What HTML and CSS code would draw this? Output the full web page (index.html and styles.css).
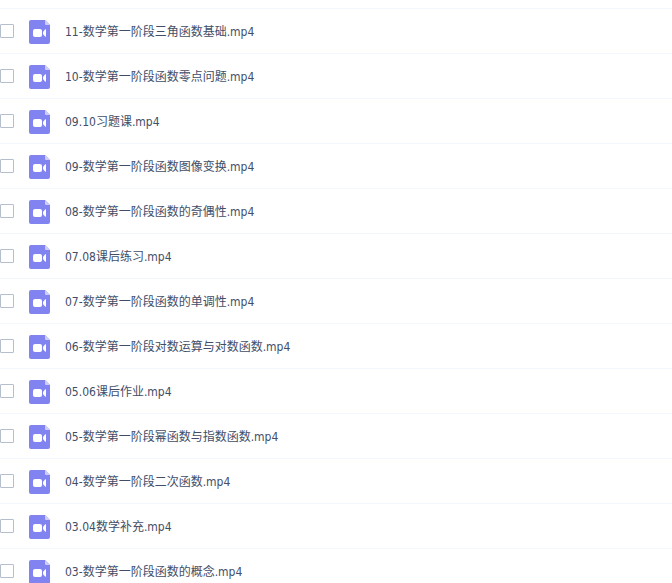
FILE: index.html
```
<!DOCTYPE html>
<html lang="zh-CN">
<head>
    <meta charset="UTF-8">
    <meta name="viewport" content="width=device-width, initial-scale=1.0">
    <title>文件列表</title>
    <link rel="stylesheet" href="styles.css">
</head>
<body>
    <svg class="sprite" aria-hidden="true">
        <symbol id="video" viewBox="0 0 21 24">
            <path fill="#8183f1" d="M2 0h14l5 5v17a2 2 0 0 1-2 2H2a2 2 0 0 1-2-2V2a2 2 0 0 1 2-2z"/>
            <path fill="#cdcdfa" d="M16 0l5 5h-4a1 1 0 0 1-1-1z"/>
            <rect fill="#fff" x="4" y="9" width="9" height="8" rx="2"/>
            <path fill="#fff" d="M17 9v8q-1 0-3-3v-2q2-3 3-3z"/>
        </symbol>
    </svg>

    <ul class="file-list">
        <li class="file-item">
            <input type="checkbox" id="f1">
            <svg class="file-icon"><use href="#video"/></svg>
            <label for="f1">11-数学第一阶段三角函数基础.mp4</label>
        </li>
        <li class="file-item">
            <input type="checkbox" id="f2">
            <svg class="file-icon"><use href="#video"/></svg>
            <label for="f2">10-数学第一阶段函数零点问题.mp4</label>
        </li>
        <li class="file-item">
            <input type="checkbox" id="f3">
            <svg class="file-icon"><use href="#video"/></svg>
            <label for="f3">09.10习题课.mp4</label>
        </li>
        <li class="file-item">
            <input type="checkbox" id="f4">
            <svg class="file-icon"><use href="#video"/></svg>
            <label for="f4">09-数学第一阶段函数图像变换.mp4</label>
        </li>
        <li class="file-item">
            <input type="checkbox" id="f5">
            <svg class="file-icon"><use href="#video"/></svg>
            <label for="f5">08-数学第一阶段函数的奇偶性.mp4</label>
        </li>
        <li class="file-item">
            <input type="checkbox" id="f6">
            <svg class="file-icon"><use href="#video"/></svg>
            <label for="f6">07.08课后练习.mp4</label>
        </li>
        <li class="file-item">
            <input type="checkbox" id="f7">
            <svg class="file-icon"><use href="#video"/></svg>
            <label for="f7">07-数学第一阶段函数的单调性.mp4</label>
        </li>
        <li class="file-item">
            <input type="checkbox" id="f8">
            <svg class="file-icon"><use href="#video"/></svg>
            <label for="f8">06-数学第一阶段对数运算与对数函数.mp4</label>
        </li>
        <li class="file-item">
            <input type="checkbox" id="f9">
            <svg class="file-icon"><use href="#video"/></svg>
            <label for="f9">05.06课后作业.mp4</label>
        </li>
        <li class="file-item">
            <input type="checkbox" id="f10">
            <svg class="file-icon"><use href="#video"/></svg>
            <label for="f10">05-数学第一阶段幂函数与指数函数.mp4</label>
        </li>
        <li class="file-item">
            <input type="checkbox" id="f11">
            <svg class="file-icon"><use href="#video"/></svg>
            <label for="f11">04-数学第一阶段二次函数.mp4</label>
        </li>
        <li class="file-item">
            <input type="checkbox" id="f12">
            <svg class="file-icon"><use href="#video"/></svg>
            <label for="f12">03.04数学补充.mp4</label>
        </li>
        <li class="file-item">
            <input type="checkbox" id="f13">
            <svg class="file-icon"><use href="#video"/></svg>
            <label for="f13">03-数学第一阶段函数的概念.mp4</label>
        </li>
    </ul>
</body>
</html>
```
FILE: styles.css
```
body {
    margin: 0;
    padding-top: 8px;
    height: 100vh;
    box-sizing: border-box;
    overflow: hidden;
    background-color: #fff;
    color: #424e67;
    font-family: "DejaVu Sans Condensed", "Noto Sans CJK SC", sans-serif;
    font-size: 12px;
    line-height: 16px;
}
.sprite {
    display: none;
}
.file-list {
    list-style: none;
    margin: 0;
    padding: 0;
}
.file-item {
    display: flex;
    align-items: center;
    height: 45px;
    box-sizing: border-box;
    border-top: 1px solid #f2f6fd;
}
.file-item input {
    appearance: none;
    box-sizing: border-box;
    width: 14px;
    height: 14px;
    margin: 0 15px 0 0;
    border: 1px solid #b4becd;
    border-radius: 1px;
    background-color: #fff;
}
.file-item input:checked {
    background-color: #8183f1;
}
.file-item label {
    padding-top: 2px;
}
.file-icon {
    width: 21px;
    height: 24px;
    margin: 2px 15px 0 0;
}
```
